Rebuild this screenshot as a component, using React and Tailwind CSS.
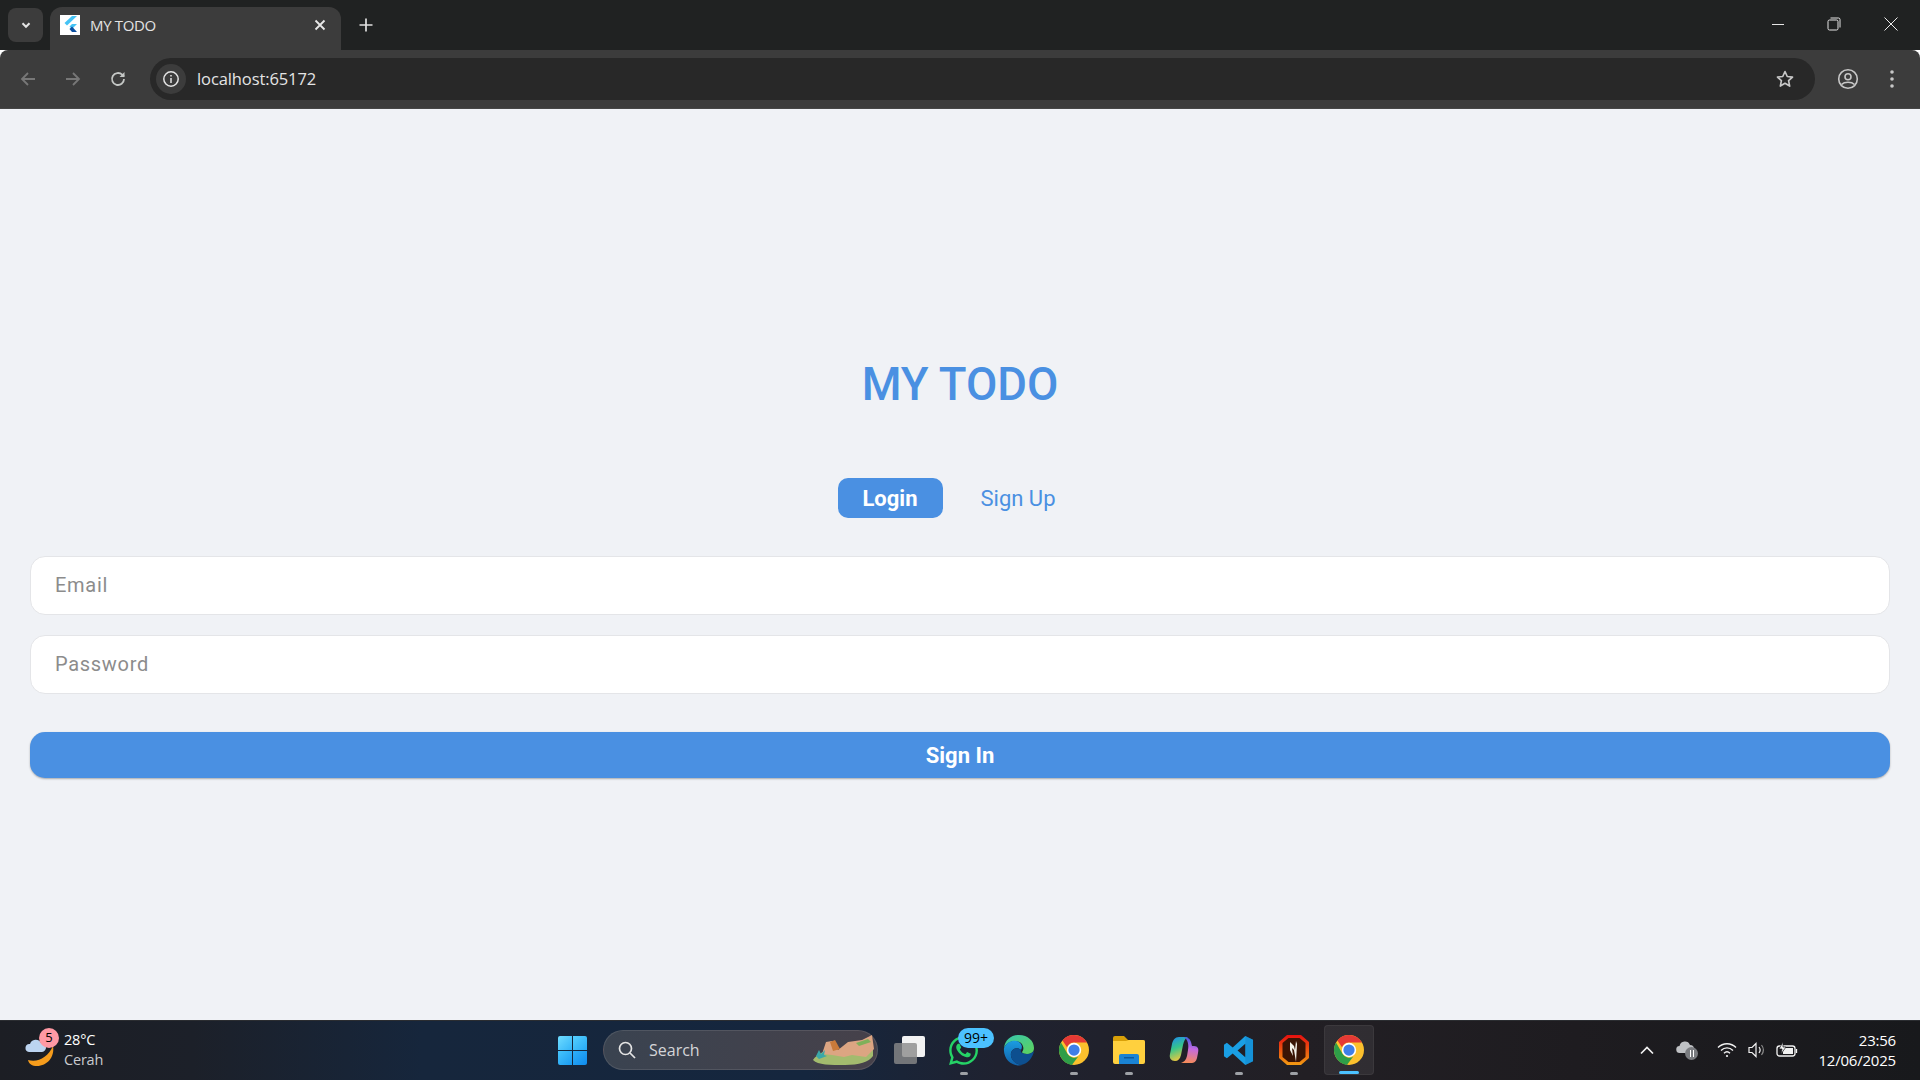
import React from "react";
import { FaWhatsapp } from "react-icons/fa";

const ui = "font-['Open_Sans','Noto_Sans',sans-serif]";

const ChromeIcon = ({ size = 30 }) => (
  <svg width={size} height={size} viewBox="0 0 48 48">
    <circle cx="24" cy="24" r="24" fill="#fbc02d" />
    <path d="M24 0a24 24 0 0 1 20.8 12H24a12 12 0 0 0-11.2 7.6L5.5 8.7A24 24 0 0 1 24 0z" fill="#e53935" />
    <path d="M3.2 12a24 24 0 0 0 17.4 35.8L30.8 34.4a12 12 0 0 1-17.2-4.5z" fill="#2e9e48" />
    <circle cx="24" cy="24" r="11.5" fill="#fff" />
    <circle cx="24" cy="24" r="9" fill="#3f7fe8" />
  </svg>
);

const EdgeIcon = () => (
  <svg width="32" height="32" viewBox="0 0 32 32">
    <defs>
      <linearGradient id="edgeA" x1="0" y1="0" x2="1" y2="1">
        <stop offset="0" stopColor="#36c5b0" />
        <stop offset="1" stopColor="#5fd35a" />
      </linearGradient>
      <linearGradient id="edgeB" x1="0" y1="0" x2="0" y2="1">
        <stop offset="0" stopColor="#1b9de2" />
        <stop offset="1" stopColor="#1160a8" />
      </linearGradient>
    </defs>
    <path d="M1 14C2 6 8 1 16 1c9 0 15 6 15 13 0 4-3 6-7 6-3 0-5-1-5-2 2-2 2-6-1-9-5-4-14-2-17 5z" fill="url(#edgeA)" />
    <path d="M1 14c3-7 11-9 15-6 4 3 3 6 2 8-3-3-9-2-10 3-1 6 4 11 11 12-1 0-2 .5-3 .5C8 31.500 0 25 1 14z" fill="url(#edgeB)" />
    <path d="M8 19c1-5 7-6 10-3-1 2 1 4 6 4 3 0 5-1 7-3-1 6-6 13-13 14C12 30 7 25 8 19z" fill="#0d4f8f" />
  </svg>
);

const FolderIcon = () => (
  <svg width="32" height="28" viewBox="0 0 32 28">
    <path d="M0 2a2 2 0 0 1 2-2h9l4 4h15a2 2 0 0 1 2 2v4H0z" fill="#d9a008" />
    <path d="M0 5h13l3-1h14a2 2 0 0 1 2 2v20a2 2 0 0 1-2 2H2a2 2 0 0 1-2-2z" fill="#ffd03e" />
    <path d="M6 20a2 2 0 0 1 2-2h16a2 2 0 0 1 2 2v8H6z" fill="#1a83d4" />
    <rect x="11" y="21" width="10" height="1.500" fill="#0b5a9e" />
  </svg>
);

const CopilotIcon = () => (
  <svg width="30" height="30" viewBox="0 0 30 30">
    <defs>
      <linearGradient id="copA" x1="0.2" y1="0" x2="0.5" y2="1">
        <stop offset="0" stopColor="#1f8fe8" />
        <stop offset="0.45" stopColor="#36c58c" />
        <stop offset="1" stopColor="#f5c83a" />
      </linearGradient>
      <linearGradient id="copB" x1="0.6" y1="0" x2="0.5" y2="1">
        <stop offset="0" stopColor="#3a5be0" />
        <stop offset="0.45" stopColor="#c46ae0" />
        <stop offset="1" stopColor="#f58a5a" />
      </linearGradient>
    </defs>
    <path d="M10 2h9c-3 1-4 4-5 8l-2 10c-1 4-3 6-6 6-4 0-6-3-5-7l2-10c1-4 3-7 7-7z" fill="url(#copA)" />
    <path d="M15 2c4 0 6 2 7 5l1 4h2c4 0 5 3 4 7l-1 5c-1 4-3 5-6 5h-10c3-1 5-3 6-7l1-6c1-5 0-10-4-13z" fill="url(#copB)" />
  </svg>
);

const VscodeIcon = () => (
  <svg width="31" height="31" viewBox="0 0 32 32">
    <path d="M23 1l8 4v22l-8 4-13-12-6 5-3-2V10l3-2 6 5z M23 9l-8 7 8 7z" fill="#1a9fe4" fillRule="evenodd" />
    <path d="M23 1l8 4v22l-8 4z M23 9v14" fill="#0e7cc4" fillOpacity="0.35" />
  </svg>
);

const ShieldIcon = () => (
  <svg width="30" height="30" viewBox="0 0 30 30">
    <defs>
      <linearGradient id="shield" x1="0" y1="0" x2="0" y2="1">
        <stop offset="0" stopColor="#e60f0f" />
        <stop offset="1" stopColor="#f29a12" />
      </linearGradient>
    </defs>
    <path d="M8 0h14l8 7v16l-8 7H8l-8-7V7z" fill="url(#shield)" />
    <path d="M9.500 3h11l6 5v14l-6 5h-11l-6-5V8z" fill="#3a1405" />
    <path d="M11 7l4 4 1 4 1-9 1 3-1 18-2-12-2-2 1 8-3-6z" fill="#f4f1ea" />
  </svg>
);

const TaskIcon = ({ children, dot, active }) => (
  <div className={`relative h-[50px] flex items-center justify-center rounded ${active ? "w-[50px] mx-[2.5px] bg-white/[0.07] border border-white/5" : "w-[55px]"}`}>
    {children}
    {dot && <span className="absolute bottom-0 left-1/2 -translate-x-1/2 w-2 h-[3px] rounded-full bg-[#9ea1a6]" />}
    {active && <span className="absolute bottom-0 left-1/2 -translate-x-1/2 w-5 h-[3px] rounded-full bg-[#4cc2ff]" />}
  </div>
);

const BrowserChrome = () => (
  <div className={`${ui} shrink-0`}>
    {/* Tabs */}
    <div className="h-[50px] bg-[#202222] flex items-end text-white">
      <div className="w-[35px] h-[34px] ml-2 mb-2 rounded-lg bg-[#3c3c3c] flex items-center justify-center">
        <svg width="14" height="14" viewBox="0 0 24 24" fill="none" stroke="#e4e4e4" strokeWidth="3.500"><path d="M6 9l6 6 6-6" /></svg>
      </div>
      <div className="w-[291px] h-[43px] ml-[7px] bg-[#3c3c3c] rounded-t-xl flex items-center pl-[10px] pr-[13px] pb-[7px]">
        <div className="w-5 h-5 bg-white flex items-center justify-center">
          <svg width="16" height="18" viewBox="0 0 16 18">
            <path d="M10 0h5L5 9.500 2.500 7z" fill="#45c3f5" />
            <path d="M10 8h5l-5 5-2.500-2.500z" fill="#45c3f5" />
            <path d="M7.500 13L10 10.500l5 5.500h-5z" fill="#0b4fa0" />
          </svg>
        </div>
        <span className="ml-[10px] text-[15px] tracking-[-0.35px] text-[#e3e3e3] flex-1">MY TODO</span>
        <svg width="14" height="14" viewBox="0 0 14 14" stroke="#e8e8e8" strokeWidth="1.800" className="mr-[1px]"><path d="M2.500 2.500l9 9M11.500 2.500l-9 9" /></svg>
      </div>
      <svg width="16" height="16" viewBox="0 0 16 16" stroke="#e0e0e0" strokeWidth="1.700" className="ml-[17px] mb-[17px]"><path d="M8 1.500v13M1.500 8h13" /></svg>
      <div className="flex-1" />
      <div className="flex items-center mb-[19px] mr-[22px]">
        <svg width="14" height="14" viewBox="0 0 14 14" stroke="#e6e6e6" strokeWidth="1"><path d="M1 7.500h12" /></svg>
        <svg width="14" height="14" viewBox="0 0 14 14" fill="none" stroke="#e6e6e6" strokeWidth="1" className="ml-[42px]"><rect x="1" y="3" width="10" height="10" rx="1.500" /><path d="M3.500 1h8a1.500 1.500 0 0 1 1.500 1.500v8" /></svg>
        <svg width="14" height="14" viewBox="0 0 14 14" stroke="#ececec" strokeWidth="1" className="ml-[43px]"><path d="M.5.500l13 13M13.500.500l-13 13" /></svg>
      </div>
    </div>
    {/* Toolbar */}
    <div className="h-[59px] bg-[#3c3c3c] rounded-t-lg border-b border-b-[#464646] flex items-center">
      <svg width="18" height="18" viewBox="0 0 18 18" fill="none" stroke="#777" strokeWidth="1.800" className="ml-[19px]"><path d="M16 9H3M9 3L3 9l6 6" /></svg>
      <svg width="18" height="18" viewBox="0 0 18 18" fill="none" stroke="#777" strokeWidth="1.800" className="ml-[27px]"><path d="M2 9h13M9 3l6 6-6 6" /></svg>
      <svg width="18" height="18" viewBox="0 0 18 18" fill="none" stroke="#c4c7c5" strokeWidth="1.800" className="ml-[27px]"><path d="M15 9a6 6 0 1 1-1.800-4.300L15 6.500" /><path d="M15.500 2v5h-5" fill="#c4c7c5" stroke="none" /></svg>
      <div className="ml-[23px] w-[1665px] h-[42px] rounded-full bg-[#282828] flex items-center pl-[6px] pr-[20px]">
        <div className="w-[30px] h-[30px] rounded-full bg-[#3c3c3c] flex items-center justify-center">
          <svg width="18" height="18" viewBox="0 0 18 18" fill="none" stroke="#e3e3e3" strokeWidth="1.500"><circle cx="9" cy="9" r="7.200" /><path d="M9 8v5M9 5v1.500" /></svg>
        </div>
        <span className="ml-[11px] text-[16.500px] tracking-[-0.1px] text-[#e4e4e4] flex-1">localhost:65172</span>
        <svg width="20" height="20" viewBox="0 0 24 24" fill="none" stroke="#c7c7c7" strokeWidth="2" strokeLinejoin="round"><path d="M12 3l2.700 6 6.300.7-4.700 4.300 1.300 6.500-5.600-3.300-5.600 3.300 1.300-6.500L3 9.700 9.300 9z" /></svg>
      </div>
      <svg width="22" height="22" viewBox="0 0 22 22" fill="none" stroke="#c7c7c7" strokeWidth="1.600" className="ml-[22px]"><circle cx="11" cy="11" r="9.300" /><circle cx="11" cy="8.800" r="3" /><path d="M4.500 16.500c3-3 10-3 13 0" /></svg>
      <svg width="6" height="20" viewBox="0 0 6 20" fill="#c7c7c7" className="ml-[30px]"><circle cx="3" cy="3" r="1.800" /><circle cx="3" cy="10" r="1.800" /><circle cx="3" cy="17" r="1.800" /></svg>
    </div>
  </div>
);

const Taskbar = () => (
  <div className={`${ui} shrink-0 h-[60px] shadow-[inset_0_1px_0_#2b2d31] bg-[linear-gradient(90deg,#1c1e24_0%,#1c2029_10%,#16263c_22%,#15263e_42%,#1f2230_52%,#221f24_68%,#1e1c20_82%,#18191c_100%)] flex items-center text-white`}>
    {/* Weather */}
    <div className="relative w-[558px] h-full flex items-center pl-[25px]">
      <svg width="30" height="34" viewBox="0 0 30 34" className="mt-[1px]">
        <path d="M28 12c2 11-6 20-16 20-5 0-8-2-9-6 10 3 20-3 25-14z" fill="#f59c1c" />
        <path d="M4 18a4 4 0 0 1 1-8 6 6 0 0 1 11-1 4.500 4.500 0 0 1 1 9z" fill="#bcd4f0" />
      </svg>
      <span className="absolute left-[39px] top-[8px] w-5 h-5 rounded-full bg-[#ff99a4] text-black text-[13px] flex items-center justify-center">5</span>
      <div className="ml-[9px] -mt-[1px] text-[14.500px] leading-[20px] tracking-[-0.2px]">
        <p>28°C</p>
        <p className="text-[#c9cbcf]">Cerah</p>
      </div>
    </div>
    {/* Start + search */}
    <div className="grid grid-cols-2 gap-[1px] w-[29px] h-[29px] rounded-[2px] overflow-hidden">
      <span className="bg-[linear-gradient(135deg,#6fdcff,#33b4f8)]" />
      <span className="bg-[linear-gradient(135deg,#55d0ff,#28a9f5)]" />
      <span className="bg-[linear-gradient(135deg,#46c4fc,#1a9bf2)]" />
      <span className="bg-[linear-gradient(135deg,#2fb0f8,#0f8bee)]" />
    </div>
    <div className="relative ml-4 w-[275px] h-[40px] rounded-full bg-[linear-gradient(90deg,#3a4350,#46414a)] border border-white/10 flex items-center pl-[13px]">
      <svg width="20" height="20" viewBox="0 0 20 20" fill="none" stroke="#e4e4e4" strokeWidth="1.700"><circle cx="8.500" cy="8.500" r="6" /><path d="M13 13l5 5" /></svg>
      <span className="ml-[12px] text-[16px] text-[#d4d5d8]">Search</span>
      <svg width="62" height="32" viewBox="0 0 62 32" className="absolute right-[3px] top-[3px]">
        <path d="M1 26c4-6 12-10 20-10 12 0 28-4 40-2v8c-4 6-14 9-28 9C18 31 6 31 1 26z" fill="#a3bb6e" />
        <path d="M10 20l4-12 6-1 6 9 10-8 14-2 10-5 2 14-8 8-14-2-8 2-12-2z" fill="#dca582" />
        <path d="M18 8l5-2 5 9-7 2z" fill="#c97a3a" />
        <path d="M4 22l3-6 2 4 4-4-1 5 3 1-8 3z" fill="#3aa8a8" />
        <path d="M44 9l12-4 3 3-12 4z" fill="#7fb05a" />
      </svg>
    </div>
    {/* Pinned apps */}
    <div className="ml-[16px] relative w-[31px] h-[28px]">
      <span className="absolute right-0 top-0 w-[23px] h-[21px] rounded-[2px] bg-[#f2f2f2]" />
      <span className="absolute left-0 bottom-0 w-[23px] h-[21px] rounded-[2px] bg-[#8a8a8a]/80" />
    </div>
    <div className="ml-[11px] flex items-center">
      <TaskIcon dot>
        <FaWhatsapp size={33} color="#25d366" />
        <span className="absolute left-[22px] top-[3px] h-[20px] px-[6px] rounded-full bg-[#4cc2ff] text-black text-[14px] leading-[20px]">99+</span>
      </TaskIcon>
      <TaskIcon><EdgeIcon /></TaskIcon>
      <TaskIcon dot><ChromeIcon /></TaskIcon>
      <TaskIcon dot><FolderIcon /></TaskIcon>
      <TaskIcon><CopilotIcon /></TaskIcon>
      <TaskIcon dot><VscodeIcon /></TaskIcon>
      <TaskIcon dot><ShieldIcon /></TaskIcon>
      <TaskIcon active><ChromeIcon /></TaskIcon>
    </div>
    <div className="flex-1" />
    {/* Tray */}
    <svg width="16" height="10" viewBox="0 0 16 10" fill="none" stroke="#f2f2f2" strokeWidth="1.700"><path d="M2 8.500l6-6 6 6" /></svg>
    <div className="relative ml-[21px] w-[20px] h-[20px]">
      <svg width="18" height="14" viewBox="0 0 18 14" className="absolute left-0 top-0"><path d="M4 13a3.500 3.500 0 0 1-.5-7A5.500 5.500 0 0 1 14 5a4 4 0 0 1 0 8z" fill="#bfc1c4" /></svg>
      <span className="absolute left-[9px] top-[7px] w-[13px] h-[13px] rounded-full bg-[#7a7c80] flex items-center justify-center gap-[2px]">
        <i className="w-[1px] h-[7px] bg-white" />
        <i className="w-[1px] h-[7px] bg-white" />
      </span>
    </div>
    <svg width="20" height="16" viewBox="0 0 20 16" fill="none" stroke="#f2f2f2" strokeWidth="1.400" className="ml-[21px]">
      <path d="M1 5.500c5-5 13-5 18 0M4 8.500c3.500-3.500 8.500-3.500 12 0M7 11.300c2-2 4-2 6 0" />
      <circle cx="10" cy="14" r="1.100" fill="#f2f2f2" stroke="none" />
    </svg>
    <svg width="20" height="18" viewBox="0 0 20 18" fill="none" stroke="#f2f2f2" strokeWidth="1.200" className="ml-[11px]">
      <path d="M1 6.500h3l4-4v13l-4-4H1z" />
      <path d="M11 6c1.300 1.700 1.300 4.300 0 6" />
      <path d="M13.500 4c2.300 3 2.300 7 0 10" stroke="#8a8a8a" />
    </svg>
    <svg width="22" height="16" viewBox="0 0 22 16" fill="none" stroke="#f2f2f2" strokeWidth="1.300" className="ml-[8px]">
      <rect x="1" y="4" width="18" height="10" rx="2.500" />
      <rect x="7" y="6" width="10" height="6" fill="#f2f2f2" stroke="none" />
      <path d="M20.500 7v4" />
      <path d="M7 0L3 7h3l-1 5 5-7H7z" fill="#f2f2f2" stroke="#1a1b1e" strokeWidth="0.700" />
    </svg>
    <div className="ml-[20px] mr-[24px] -mt-[1px] text-right text-[15px] leading-[20px] tracking-[-0.2px]">
      <p>23:56</p>
      <p>12/06/2025</p>
    </div>
  </div>
);

const App = () => {
  return (
    <div className="h-screen flex flex-col overflow-hidden">
      <BrowserChrome />

      {/* Flutter page */}
      <main className="flex-1 min-h-0 bg-[#f0f2f6] px-[30px] font-['Roboto',sans-serif] flex flex-col">
        <h1 className="mt-[250px] text-center text-[45.500px] leading-[52px] font-medium text-[#4a90e2]">MY TODO</h1>

        <div className="mt-[67px] flex justify-center items-center gap-[13px]">
          <button className="w-[105px] h-[40px] rounded-[10px] bg-[#4a90e2] text-white text-[22px] font-bold">Login</button>
          <button className="pl-[25px] pr-[27px] text-[22px] text-[#4a90e2]">Sign Up</button>
        </div>

        <input
          placeholder="Email"
          className="mt-[38px] h-[59px] w-full rounded-[15px] bg-white border border-[#e4e5e8] px-[24px] pb-[2px] text-[20px] tracking-[0.7px] placeholder:text-[#8c8c8c]"
        />
        <input
          placeholder="Password"
          className="mt-[20px] h-[59px] w-full rounded-[15px] bg-white border border-[#e4e5e8] px-[24px] pb-[2px] text-[20px] tracking-[0.7px] placeholder:text-[#8c8c8c]"
        />

        <button className="mt-[38px] h-[46px] w-full rounded-[15px] bg-[#4a90e2] text-white text-[22px] font-bold shadow-[0_1px_2px_rgba(0,0,0,0.3)]">
          Sign In
        </button>
      </main>

      <Taskbar />
    </div>
  );
};

export default App;
